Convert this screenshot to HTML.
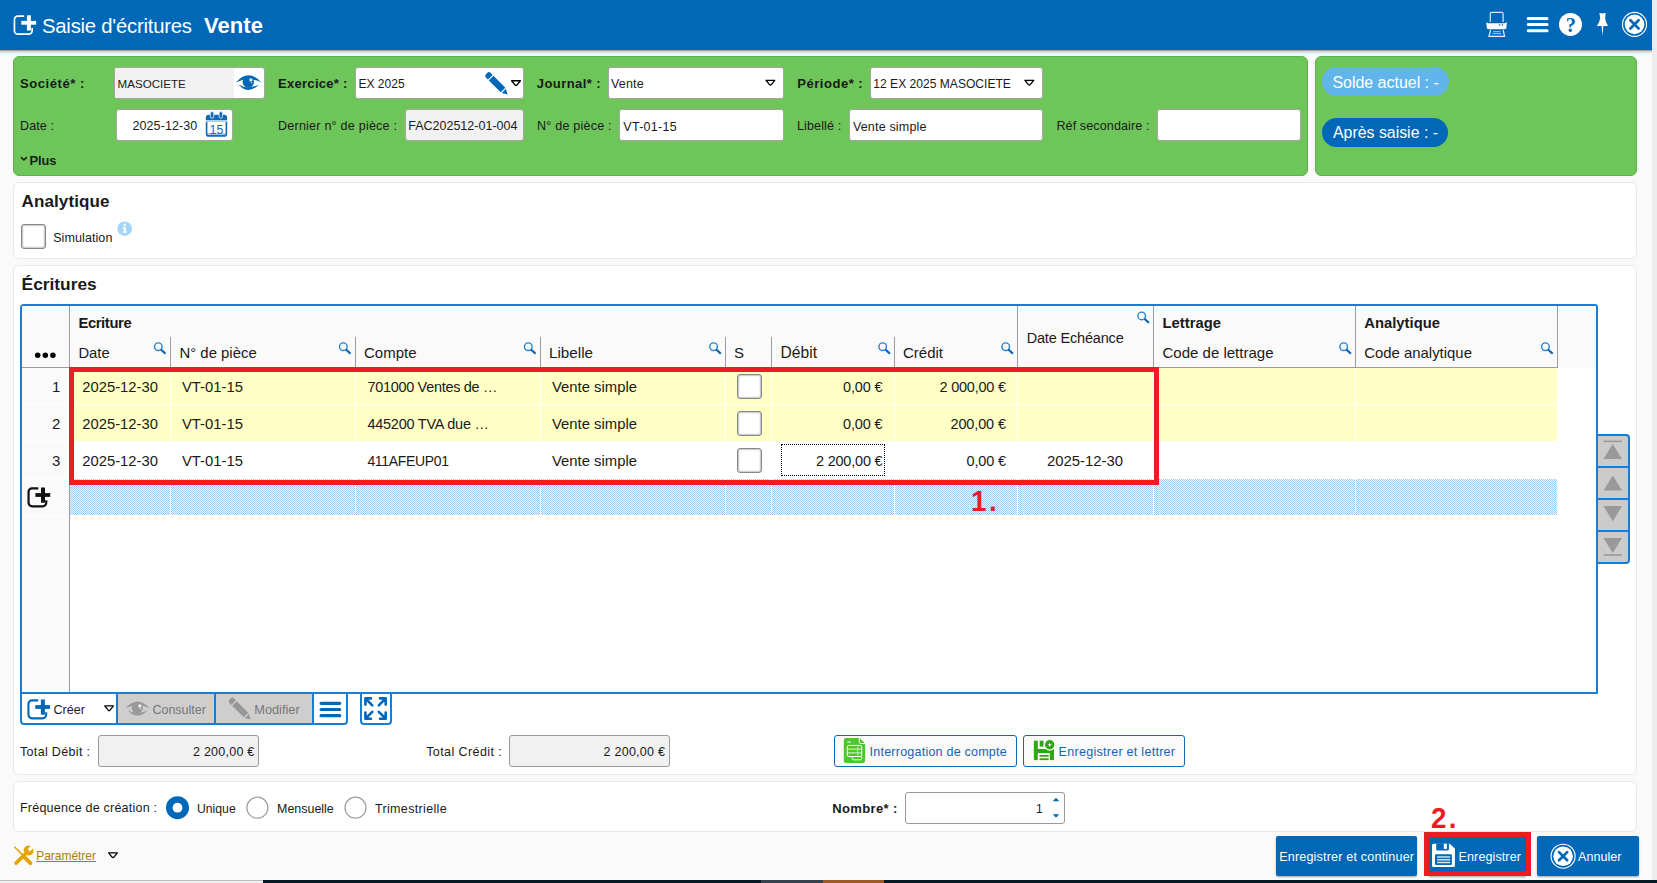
<!DOCTYPE html>
<html><head><meta charset="utf-8"><title>Saisie d'écritures</title>
<style>
*{box-sizing:border-box;margin:0;padding:0}
html,body{width:1657px;height:883px;overflow:hidden;background:#fafafa;font-family:"Liberation Sans",sans-serif;}
#r{position:relative;width:1657px;height:883px;overflow:hidden;background:#fafafa}
#r div,#r svg,#r span{position:absolute}
.t,.ta{white-space:nowrap;line-height:1;}
.gp{background:#6ec55a;border:1px solid #5fb34b;border-radius:6px;box-shadow:0 0 0 1px #fff}
.fld{background:#fff;border:1px solid #a9a3a8;border-radius:3px}
.fg{background:#f1f1f1}
.pan{background:#fff;border:1px solid #e8e8e8;border-radius:6px}
.cb{background:#fff;border:1px solid #878787;border-radius:3px;box-shadow:inset 0 0 1.5px .6px rgba(0,0,0,.38)}
.vl{width:1px;background:#9c9c9c}
.hl{height:1px;background:#9c9c9c}
.y{background:#ffffc6}
.wl{background:#fff}
.bb{background:#0168b7;border-radius:2px;box-shadow:0 1px 2px rgba(0,0,0,.35)}
</style></head><body><div id="r">

<!-- title bar -->
<div style="left:0;top:0;width:1652px;height:50px;background:#0168b7"></div>
<div style="left:0;top:50px;width:1652px;height:4px;background:linear-gradient(rgba(95,80,78,.62),rgba(120,110,110,.22) 45%,rgba(150,150,150,0))"></div>
<div style="left:1652px;top:0;width:5px;height:880px;background:#ececec"></div>

<!-- green panels -->
<div class="gp" style="left:13px;top:56px;width:1295px;height:120px"></div>
<div class="gp" style="left:1315px;top:56px;width:322px;height:120px"></div>

<!-- fields row 1 -->
<div class="fld" style="left:114px;top:67px;width:151px;height:32px;overflow:hidden"><div class="fg" style="left:0;top:0;width:119px;height:30px"></div></div>
<div class="fld" style="left:355px;top:67px;width:169px;height:32px"></div>
<div class="fld" style="left:608px;top:67px;width:176px;height:32px"></div>
<div class="fld" style="left:870px;top:67px;width:173px;height:32px"></div>
<!-- fields row 2 -->
<div class="fld" style="left:116px;top:109px;width:117px;height:32px"></div>
<div class="fld fg" style="left:405px;top:109px;width:119px;height:32px"></div>
<div class="fld" style="left:619px;top:109px;width:165px;height:32px"></div>
<div class="fld" style="left:849px;top:109px;width:194px;height:32px"></div>
<div class="fld" style="left:1157px;top:109px;width:144px;height:32px"></div>

<!-- pills -->
<div style="left:1322px;top:67px;width:127px;height:28.5px;border-radius:15px;background:#62b5ea"></div>
<div style="left:1322px;top:118px;width:126px;height:28.5px;border-radius:15px;background:#0168b7"></div>

<!-- panels -->
<div class="pan" style="left:13px;top:182px;width:1624px;height:77px"></div>
<div class="pan" style="left:13px;top:265px;width:1624px;height:510px"></div>
<div class="pan" style="left:13px;top:781px;width:1624px;height:51px"></div>

<!-- simulation checkbox -->
<div class="cb" style="left:21px;top:224px;width:25px;height:25px"></div>
<svg style="left:117px;top:221px" width="16" height="16" viewBox="0 0 16 16"><circle cx="7.7" cy="7.7" r="7.3" fill="#a3d5f8"/><rect x="6.6" y="6.3" width="2.3" height="5.2" fill="#fff"/><rect x="5.6" y="6.3" width="2" height="1.2" fill="#fff"/><rect x="5.6" y="10.5" width="4.3" height="1.2" fill="#fff"/><circle cx="7.6" cy="3.9" r="1.35" fill="#fff"/></svg>

<!-- GRID -->
<div style="left:20px;top:304px;width:1578px;height:390px;border:2px solid #167dd8;border-radius:4px 3px 0 0;background:#fff"></div>
<!-- header bg -->
<div style="left:22px;top:306px;width:1535px;height:61px;background:#fafafa"></div>
<div style="left:1558px;top:306px;width:38px;height:62px;background:#fafafa"></div>
<!-- row header col -->
<div style="left:22px;top:368px;width:47px;height:324px;background:#fafafa"></div>
<div class="wl" style="left:22px;top:404px;width:47px;height:1px"></div>
<div class="wl" style="left:22px;top:441px;width:47px;height:1px"></div>
<div class="wl" style="left:22px;top:478px;width:47px;height:1px"></div>
<div class="wl" style="left:22px;top:515px;width:47px;height:1px"></div>
<div class="vl" style="left:69px;top:306px;height:386px"></div>
<div class="hl" style="left:22px;top:367px;width:1536px"></div>
<!-- header verticals -->
<div class="vl" style="left:170px;top:337px;height:30px"></div>
<div class="vl" style="left:355px;top:337px;height:30px"></div>
<div class="vl" style="left:540px;top:337px;height:30px"></div>
<div class="vl" style="left:725px;top:337px;height:30px"></div>
<div class="vl" style="left:771px;top:337px;height:30px"></div>
<div class="vl" style="left:894px;top:337px;height:30px"></div>
<div class="vl" style="left:1017px;top:306px;height:61px"></div>
<div class="vl" style="left:1153px;top:306px;height:61px"></div>
<div class="vl" style="left:1355px;top:306px;height:61px"></div>
<div class="vl" style="left:1557px;top:306px;height:62px"></div>
<!-- dots -->
<svg style="left:34px;top:351px" width="24" height="8" viewBox="34 351 24 8"><circle cx="37.7" cy="355.2" r="2.75"/><circle cx="45.3" cy="355.2" r="2.75"/><circle cx="52.9" cy="355.2" r="2.75"/></svg>

<!-- rows -->
<div class="y" style="left:70px;top:368px;width:1487px;height:36px"></div>
<div class="y" style="left:70px;top:405px;width:1487px;height:36px"></div>
<div id="nr" style="left:70px;top:479px;width:1487px;height:36px;background:repeating-conic-gradient(#96cdfd 0% 25%,#fbf5ef 0% 50%) 0 0/2px 2px"></div>
<!-- white col separators in rows -->
<div class="wl" style="left:170px;top:368px;width:1px;height:147px"></div>
<div class="wl" style="left:355px;top:368px;width:1px;height:147px"></div>
<div class="wl" style="left:540px;top:368px;width:1px;height:147px"></div>
<div class="wl" style="left:725px;top:368px;width:1px;height:147px"></div>
<div class="wl" style="left:771px;top:368px;width:1px;height:147px"></div>
<div class="wl" style="left:894px;top:368px;width:1px;height:147px"></div>
<div class="wl" style="left:1017px;top:368px;width:1px;height:147px"></div>
<div class="wl" style="left:1153px;top:368px;width:1px;height:147px"></div>
<div class="wl" style="left:1355px;top:368px;width:1px;height:147px"></div>

<!-- row checkboxes -->
<div class="cb" style="left:737px;top:374px;width:25px;height:25px"></div>
<div class="cb" style="left:737px;top:411px;width:25px;height:25px"></div>
<div class="cb" style="left:737px;top:448px;width:25px;height:25px"></div>
<!-- dotted focus -->
<div style="left:781px;top:444px;width:104px;height:32px;border:1px dotted #000"></div>

<!-- red annotation box -->
<div style="left:69px;top:367px;width:1090px;height:118px;border:5px solid #ed1c24"></div>

<!-- nav buttons -->
<div style="left:1596px;top:434px;width:34px;height:130px;background:#cbcbcb;border:2px solid #167dd8;border-radius:0 4px 4px 0"></div>
<div style="left:1598px;top:466px;width:30px;height:1.5px;background:#167dd8"></div>
<div style="left:1598px;top:498px;width:30px;height:1.5px;background:#167dd8"></div>
<div style="left:1598px;top:530px;width:30px;height:1.5px;background:#167dd8"></div>
<svg style="left:1598px;top:436px" width="30" height="126" viewBox="1598 436 30 126" fill="#999">
<rect x="1603.5" y="440.6" width="18.5" height="1.6"/><path d="M1612.8 444 L1622 459 L1603.5 459Z"/>
<path d="M1612.8 475.5 L1622 490.5 L1603.5 490.5Z"/>
<path d="M1603.5 506 L1622 506 L1612.8 521.5Z"/>
<path d="M1603.5 538 L1622 538 L1612.8 553Z"/><rect x="1603.5" y="554.2" width="18.5" height="1.6"/>
</svg>

<!-- toolbar -->
<div style="left:20px;top:692px;width:328px;height:33px;border:2px solid #167dd8;border-radius:0 0 4px 4px;background:#fff"></div>
<div style="left:118px;top:694px;width:194px;height:29px;background:#cecece"></div>
<div style="left:116px;top:694px;width:2px;height:29px;background:#167dd8"></div>
<div style="left:214px;top:694px;width:2px;height:29px;background:#167dd8"></div>
<div style="left:312px;top:694px;width:2px;height:29px;background:#167dd8"></div>
<div style="left:360px;top:692px;width:32px;height:33px;border:2px solid #167dd8;border-radius:0 0 4px 4px;background:#fff"></div>

<!-- totals -->
<div class="fld fg" style="left:98px;top:735px;width:161px;height:32px;border-color:#9a9a9a"></div>
<div class="fld fg" style="left:509px;top:735px;width:161px;height:32px;border-color:#9a9a9a"></div>
<div style="left:834px;top:735px;width:183px;height:32px;border:1px solid #1168b3;border-radius:3px;background:#fafafa"></div>
<div style="left:1023px;top:735px;width:162px;height:32px;border:1px solid #1168b3;border-radius:3px;background:#fafafa"></div>

<!-- nombre -->
<div class="fld" style="left:905px;top:792px;width:160px;height:32px;border-color:#9a9a9a"></div>

<!-- radios -->
<svg style="left:165px;top:795px" width="204" height="26" viewBox="165 795 204 26">
<circle cx="177.5" cy="807.7" r="11.5" fill="#0168b7"/><circle cx="177.5" cy="807.7" r="4.9" fill="#fff"/>
<circle cx="257.4" cy="807.7" r="10.5" fill="#fff" stroke="#a2a2a2" stroke-width="1.3"/>
<circle cx="355.5" cy="807.7" r="10.5" fill="#fff" stroke="#a2a2a2" stroke-width="1.3"/>
</svg>

<!-- bottom buttons -->
<div class="bb" style="left:1276px;top:836px;width:141px;height:40px"></div>
<div class="bb" style="left:1429px;top:836px;width:97px;height:40px;border-radius:0"></div>
<div style="left:1424px;top:832px;width:107px;height:44px;border:5px solid #ed1c24"></div>
<div class="bb" style="left:1537px;top:836px;width:102px;height:40px"></div>

<!-- bottom strip -->
<div style="left:0;top:880px;width:263px;height:3px;background:#f0f0f0;border-top:1px solid #bdbdbd"></div>
<div style="left:263px;top:880px;width:1394px;height:3px;background:#041825"></div>
<div style="left:761px;top:880px;width:62px;height:3px;background:#33424d"></div>
<div style="left:823px;top:880px;width:61px;height:3px;background:#9c5a26"></div>

<span class="ta" id="a1" style="left:971.3px;top:486px;font-size:29.6px;font-weight:700;color:#ed1c24;letter-spacing:2.6px;transform:scaleX(.94);transform-origin:0 0">1.</span>
<span class="ta" id="a2" style="left:1431.1px;top:803.4px;font-size:29.6px;font-weight:700;color:#ed1c24;letter-spacing:2.4px;transform:scaleX(.94);transform-origin:0 0">2.</span>
<svg style="left:0;top:0" width="1657" height="883" viewBox="0 0 1657 883">
<defs>
<g id="cr"><path d="M10.6 0.85H4.35A3.5 3.5 0 0 0 0.85 4.35V15.35A3.5 3.5 0 0 0 4.35 18.85H15.05A3.5 3.5 0 0 0 18.55 15.35V12.7" fill="none" stroke="currentColor" style="stroke-width:var(--sw,1.7px)"/><rect x="7.7" y="5.6" width="14.8" height="3.8" fill="currentColor"/><rect x="13.3" y="0" width="4" height="15.2" fill="currentColor"/></g>
<g id="eye"><path d="M0 7.6Q12.5 -6.6 25.2 7.6Q12.5 1.2 0 7.6Z" fill="currentColor"/><circle cx="12.3" cy="7.2" r="5.7" fill="currentColor"/><circle cx="14.9" cy="5.1" r="1.6" fill="#fff" fill-opacity=".9"/><circle cx="15.6" cy="8" r=".7" fill="#fff" fill-opacity=".8"/><path d="M2.4 9.6Q12.5 20.6 23 9.6Q12.5 15.4 2.4 9.6Z" fill="currentColor"/></g>
<g id="pen"><path d="M2.2 -3.3H5.2V3.3H2.2A2.2 2.2 0 0 1 0 1.1V-1.1A2.2 2.2 0 0 1 2.2 -3.3Z"/><rect x="6.4" y="-3.3" width="16.8" height="6.6"/><path d="M24.4 -2.9L29.7 0L24.4 2.9Z"/></g>
<g id="dd"><path d="M0.7 0.75H9.5L6 5Q5.1 5.9 4.2 5Z" fill="#fff" stroke="#000" stroke-width="1.3" stroke-linejoin="round"/></g>
<g id="mag"><circle cx="4.7" cy="4.1" r="3.8" fill="none" stroke="#2583d0" stroke-width="1.4"/><path d="M7.9 7.4L11.3 10.5" stroke="#1466b3" stroke-width="2.2" stroke-linecap="round"/></g>
<g id="cx"><circle cx="0" cy="0" r="12" fill="none" stroke="#fff" stroke-width="1.15"/><circle cx="0" cy="0" r="9.8" fill="#fff"/><path d="M-4.1 -4.1L4.1 4.1M4.1 -4.1L-4.1 4.1" stroke="#0168b7" stroke-width="2.7" stroke-linecap="round"/></g>
</defs>

<!-- title icons -->
<use href="#cr" x="13.6" y="15.3" color="#fff"/>
<!-- printer -->
<path d="M1490.3 22V13.9A1.5 1.5 0 0 1 1491.8 12.4H1501.6A1.5 1.5 0 0 1 1503.1 13.9V22" fill="none" stroke="#fff" stroke-opacity=".85" stroke-width="1.2"/>
<path d="M1486.3 22.2L1488.2 23.2H1505L1506.9 22.2L1506.3 28.4L1504.6 29.2H1488.6L1486.9 28.4Z" fill="#fff"/>
<rect x="1498.8" y="24.2" width="1.4" height="1.4" fill="#0168b7"/><rect x="1501.7" y="24.2" width="1.4" height="1.4" fill="#0168b7"/>
<path d="M1490.6 30L1489 36.4H1504.6L1503.1 30" fill="none" stroke="#fff" stroke-width="1.2" stroke-opacity=".9"/>
<path d="M1493 31.7H1500.6M1492.3 33.7H1501.3" stroke="#fff" stroke-opacity=".65" stroke-width="1"/>
<!-- hamburger -->
<path d="M1528.2 18.45H1547M1528.2 24.45H1547M1528.2 30.7H1547" stroke="#fff" stroke-width="3.1" stroke-linecap="round"/>
<!-- help -->
<circle cx="1570.5" cy="24.4" r="11.5" fill="#fff"/>
<text x="1570.9" y="31.5" font-family="Liberation Serif" font-weight="700" font-size="20.5" fill="#0168b7" text-anchor="middle">?</text>
<!-- pin -->
<path d="M1599.4 13Q1602.5 13.8 1605.7 13L1605.1 18Q1605.3 21.5 1608 25.9H1603.4L1602.5 35.8L1601.6 25.9H1596.9Q1599.9 21.5 1600.2 18Z" fill="#fff"/>
<!-- close -->
<use href="#cx" x="1634.5" y="24.4"/>

<!-- eye in societe -->
<use href="#eye" x="236" y="74.8" color="#0168b7"/>
<!-- calendar -->
<path d="M205.8 120.3V117.8A3 3 0 0 1 208.8 114.8H224.2A3 3 0 0 1 227.2 117.8V120.3Z" fill="#1469b5"/>
<rect x="205.8" y="120.3" width="21.4" height="1.8" fill="#a8cdec"/>
<path d="M206.6 122V133.9A2 2 0 0 0 208.6 135.9H224.4A2 2 0 0 0 226.4 133.9V122" fill="#fff" stroke="#1469b5" stroke-width="1.6"/>
<path d="M207 134H226" stroke="#1469b5" stroke-width=".9" stroke-opacity=".8"/>
<rect x="210.4" y="111.6" width="3.4" height="6.6" rx="1.7" fill="#1469b5" stroke="#d6e9f8" stroke-width=".9"/>
<rect x="219.1" y="111.6" width="3.4" height="6.6" rx="1.7" fill="#1469b5" stroke="#d6e9f8" stroke-width=".9"/>
<text x="216.4" y="133.7" font-family="Liberation Sans" font-size="12.3" fill="#1469b5" text-anchor="middle">15</text>
<!-- pencil blue -->
<g transform="translate(486.6 73.6) rotate(45)" fill="#0168b7"><use href="#pen"/></g>
<!-- dropdowns -->
<use href="#dd" x="510.9" y="80"/>
<use href="#dd" x="765.3" y="79.6"/>
<use href="#dd" x="1024.2" y="79.6"/>
<!-- plus chevron -->
<path d="M21.4 157.6L23.9 160L26.4 157.6" fill="none" stroke="#1a1a1a" stroke-width="1.5" stroke-linecap="round" stroke-linejoin="round"/>

<!-- magnifiers -->
<use href="#mag" x="153.6" y="342.6"/><use href="#mag" x="338.6" y="342.6"/><use href="#mag" x="523.6" y="342.6"/><use href="#mag" x="708.9" y="342.6"/>
<use href="#mag" x="878" y="342.6"/><use href="#mag" x="1001" y="342.6"/><use href="#mag" x="1137" y="311.8"/><use href="#mag" x="1339" y="342.6"/><use href="#mag" x="1540.7" y="342.6"/>

<!-- new row icon -->
<use href="#cr" x="27.7" y="487.5" color="#111" style="--sw:2.2px"/>

<!-- toolbar icons -->
<use href="#cr" x="27.6" y="699.5" color="#0168b7" style="--sw:2.1px"/>
<use href="#dd" x="104" y="705.2"/>
<g transform="translate(125.3 701) scale(.976 .96)"><use href="#eye" color="#999"/></g>
<g transform="translate(230 699) rotate(45) scale(.98)" fill="#979797"><use href="#pen"/></g>
<path d="M321.1 703.3H339.7M321.1 709.5H339.7M321.1 715.7H339.7" stroke="#0168b7" stroke-width="3.2" stroke-linecap="round"/>
<!-- fullscreen -->
<g fill="none" stroke="#0168b7" stroke-width="2.6" stroke-linecap="round" stroke-linejoin="round">
<path d="M371 698.4H365.4V704.6M365.9 698.9L372.3 705.3"/>
<path d="M380 698.4H385.7V704.6M385.2 698.9L378.8 705.3"/>
<path d="M371 718.7H365.4V712.5M365.9 718.2L372.3 711.8"/>
<path d="M380 718.7H385.7V712.5M385.2 718.2L378.8 711.8"/>
</g>

<!-- green doc icon -->
<path d="M846.3 738.1H859.3L865.1 743.5V760.4A2.5 2.5 0 0 1 862.6 762.9H846.3A2.5 2.5 0 0 1 843.8 760.4V740.6A2.5 2.5 0 0 1 846.3 738.1Z" fill="#4cc82b"/>
<path d="M859.3 738.1V742.3A1.2 1.2 0 0 0 860.5 743.5H865.1" fill="#4cc82b" stroke="#fff" stroke-width="1"/>
<path d="M847.3 742.1H851" stroke="#fff" stroke-opacity=".75" stroke-width="1.3"/>
<rect x="847.3" y="745.4" width="14.4" height="11.2" rx="1.6" fill="none" stroke="#fff" stroke-width="1"/>
<path d="M847.3 749.1H861.7M847.3 752.9H861.7" stroke="#fff" stroke-width=".9" stroke-opacity=".9"/>
<path d="M857.8 745.4V756.6" stroke="#fff" stroke-width=".9" stroke-opacity=".6"/>
<path d="M852.2 756.6V758.4A1.4 1.4 0 0 0 853.6 759.8H860.3A1.4 1.4 0 0 0 861.7 758.4V756.6" fill="none" stroke="#fff" stroke-width="1"/>
<!-- green floppy -->
<g fill="#2ea812">
<rect x="1033.9" y="740.7" width="3.9" height="19.4"/>
<rect x="1039.7" y="740.7" width="3.8" height="5.9"/>
<rect x="1033.9" y="749" width="20.1" height="4.1"/>
<rect x="1049.9" y="750.2" width="4.1" height="9.9"/>
<rect x="1039.5" y="755" width="9.2" height="1.7"/>
<rect x="1039.5" y="758.3" width="9.2" height="1.8"/>
</g>
<circle cx="1049.7" cy="744.8" r="5.3" fill="#2ea812" stroke="#fafafa" stroke-width="1.2"/>
<path d="M1049.7 742.7L1050.3 744.2L1051.8 744.8L1050.3 745.4L1049.7 746.9L1049.1 745.4L1047.6 744.8L1049.1 744.2Z" fill="#fff"/>

<!-- spinner -->
<path d="M1052.7 801.3L1056 797.8L1059.3 801.3Z" fill="#0168b7"/><path d="M1052.7 814.2L1056 817.7L1059.3 814.2Z" fill="#0168b7"/>

<!-- wrench & screwdriver -->
<g stroke="#e5a50a" fill="none" stroke-linecap="round">
<path d="M14.6 847L23 855.4" stroke-width="1.5"/>
<path d="M24.6 857.3L30.4 863.1" stroke-width="3.9"/>
<path d="M16.1 863.1L25.5 853.7" stroke-width="3.7"/>
</g>
<path d="M24.4 852.6A4.6 4.6 0 0 1 30.6 846.2L27.7 849.1L29.9 851.4L32.9 848.5A4.6 4.6 0 0 1 26.6 854.8Z" fill="#e5a50a"/>
<use href="#dd" x="107.9" y="852.1"/>

<!-- floppy white -->
<path d="M1433.5 843.8H1449.6L1454.9 848.6V865.4A1.5 1.5 0 0 1 1453.4 866.9H1433.5A1.5 1.5 0 0 1 1432 865.4V845.3A1.5 1.5 0 0 1 1433.5 843.8Z" fill="#fff"/>
<path d="M1436.2 843.6H1448.9V849.3A1.2 1.2 0 0 1 1447.7 850.5H1437.4A1.2 1.2 0 0 1 1436.2 849.3Z" fill="#0168b7"/>
<rect x="1443.8" y="843.8" width="3.1" height="5.3" rx=".6" fill="#fff"/>
<rect x="1435" y="854.2" width="16.9" height="10.9" rx="1" fill="#0168b7"/>
<path d="M1437.6 856.9H1449.6M1437.6 859.8H1449.6M1437.6 862.6H1449.6" stroke="#fff" stroke-opacity=".82" stroke-width="1.5" stroke-linecap="round"/>
<!-- annuler circle x -->
<use href="#cx" x="1563.1" y="856.2"/>
</svg>

<span class="t" id="t0" style="left:42.0px;top:16.00px;font-size:20.27px;color:#fff;letter-spacing:-0.217px;">Saisie d&#x27;écritures</span>
<span class="t" id="t1" style="left:204.0px;top:15.00px;font-size:21.95px;color:#fff;font-weight:700;letter-spacing:0.117px;">Vente</span>
<span class="t" id="t2" style="left:20.0px;top:77.00px;font-size:13.06px;color:#1a1a1a;font-weight:700;letter-spacing:0.537px;">Société* :</span>
<span class="t" id="t3" style="left:117.6px;top:79.00px;font-size:11.58px;color:#1a1a1a;letter-spacing:-0.013px;">MASOCIETE</span>
<span class="t" id="t4" style="left:278.0px;top:77.00px;font-size:13.06px;color:#1a1a1a;font-weight:700;letter-spacing:0.267px;">Exercice* :</span>
<span class="t" id="t5" style="left:358.4px;top:78.00px;font-size:12.07px;color:#1a1a1a;">EX 2025</span>
<span class="t" id="t6" style="left:536.8px;top:77.00px;font-size:13.06px;color:#1a1a1a;font-weight:700;letter-spacing:0.403px;">Journal* :</span>
<span class="t" id="t7" style="left:611.0px;top:78.00px;font-size:12.54px;color:#1a1a1a;letter-spacing:0.159px;">Vente</span>
<span class="t" id="t8" style="left:797.3px;top:77.00px;font-size:13.06px;color:#1a1a1a;font-weight:700;letter-spacing:0.499px;">Période* :</span>
<span class="t" id="t9" style="left:873.3px;top:78.00px;font-size:12.08px;color:#1a1a1a;">12 EX 2025 MASOCIETE</span>
<span class="t" id="t10" style="left:20.0px;top:120.00px;font-size:12.54px;color:#1a1a1a;letter-spacing:0.113px;">Date :</span>
<span class="t" id="t11" style="left:132.5px;top:120.00px;font-size:12.54px;color:#1a1a1a;letter-spacing:0.066px;">2025-12-30</span>
<span class="t" id="t12" style="left:278.0px;top:120.00px;font-size:12.54px;color:#1a1a1a;letter-spacing:0.231px;">Dernier n° de pièce :</span>
<span class="t" id="t13" style="left:408.2px;top:120.00px;font-size:12.52px;color:#1a1a1a;">FAC202512-01-004</span>
<span class="t" id="t14" style="left:537.0px;top:120.00px;font-size:12.54px;color:#1a1a1a;letter-spacing:0.226px;">N° de pièce :</span>
<span class="t" id="t15" style="left:623.3px;top:121.00px;font-size:12.54px;color:#1a1a1a;letter-spacing:0.265px;">VT-01-15</span>
<span class="t" id="t16" style="left:797.0px;top:120.00px;font-size:12.54px;color:#1a1a1a;letter-spacing:0.125px;">Libellé :</span>
<span class="t" id="t17" style="left:852.9px;top:121.00px;font-size:12.54px;color:#1a1a1a;letter-spacing:0.168px;">Vente simple</span>
<span class="t" id="t18" style="left:1056.4px;top:120.00px;font-size:12.54px;color:#1a1a1a;letter-spacing:0.123px;">Réf secondaire :</span>
<span class="t" id="t19" style="left:29.4px;top:155.00px;font-size:12.83px;color:#1a1a1a;font-weight:700;">Plus</span>
<span class="t" id="t20" style="left:1332.4px;top:75.00px;font-size:15.95px;color:#fff;letter-spacing:0.006px;">Solde actuel : -</span>
<span class="t" id="t21" style="left:1333.0px;top:125.00px;font-size:15.88px;color:#fff;">Après saisie : -</span>
<span class="t" id="t22" style="left:21.6px;top:193.00px;font-size:17px;color:#1a1a1a;font-weight:700;letter-spacing:0.110px;">Analytique</span>
<span class="t" id="t23" style="left:53.2px;top:232.00px;font-size:12.54px;color:#1a1a1a;letter-spacing:0.076px;">Simulation</span>
<span class="t" id="t24" style="left:21.6px;top:276.00px;font-size:17.32px;color:#1a1a1a;font-weight:700;letter-spacing:0.005px;">Écritures</span>
<span class="t" id="t25" style="left:78.4px;top:316.00px;font-size:14.8px;color:#1a1a1a;font-weight:700;letter-spacing:-0.375px;">Ecriture</span>
<span class="t" id="t26" style="left:78.4px;top:346.00px;font-size:14.82px;color:#1a1a1a;">Date</span>
<span class="t" id="t27" style="left:179.5px;top:346.00px;font-size:14.9px;color:#1a1a1a;letter-spacing:0.004px;">N° de pièce</span>
<span class="t" id="t28" style="left:364.0px;top:345.00px;font-size:14.99px;color:#1a1a1a;letter-spacing:0.006px;">Compte</span>
<span class="t" id="t29" style="left:549.0px;top:345.00px;font-size:15.22px;color:#1a1a1a;">Libelle</span>
<span class="t" id="t30" style="left:733.9px;top:345.00px;font-size:15px;color:#1a1a1a;">S</span>
<span class="t" id="t31" style="left:780.6px;top:345.00px;font-size:15.59px;color:#1a1a1a;letter-spacing:0.006px;">Débit</span>
<span class="t" id="t32" style="left:903.0px;top:345.00px;font-size:14.99px;color:#1a1a1a;">Crédit</span>
<span class="t" id="t33" style="left:1026.7px;top:331.00px;font-size:14.47px;color:#1a1a1a;letter-spacing:-0.161px;">Date Echéance</span>
<span class="t" id="t34" style="left:1162.5px;top:316.00px;font-size:14.8px;color:#1a1a1a;font-weight:700;letter-spacing:0.016px;">Lettrage</span>
<span class="t" id="t35" style="left:1162.5px;top:345.00px;font-size:15.01px;color:#1a1a1a;letter-spacing:0.005px;">Code de lettrage</span>
<span class="t" id="t36" style="left:1364.2px;top:316.00px;font-size:14.8px;color:#1a1a1a;font-weight:700;letter-spacing:0.018px;">Analytique</span>
<span class="t" id="t37" style="left:1364.2px;top:346.00px;font-size:14.91px;color:#1a1a1a;">Code analytique</span>
<span class="t" id="t38" style="left:53.5px;top:704.00px;font-size:12.59px;color:#1a1a1a;letter-spacing:0.012px;">Créer</span>
<span class="t" id="t39" style="left:152.4px;top:704.00px;font-size:12.54px;color:#777;letter-spacing:-0.005px;">Consulter</span>
<span class="t" id="t40" style="left:254.3px;top:704.00px;font-size:12.76px;color:#777;letter-spacing:0.006px;">Modifier</span>
<span class="t" id="t41" style="left:20.0px;top:746.00px;font-size:12.54px;color:#1a1a1a;letter-spacing:0.319px;">Total Débit :</span>
<span class="t" id="t42" style="left:193.0px;top:746.00px;font-size:12.54px;color:#1a1a1a;letter-spacing:0.230px;">2 200,00 €</span>
<span class="t" id="t43" style="left:426.2px;top:746.00px;font-size:12.54px;color:#1a1a1a;letter-spacing:0.397px;">Total Crédit :</span>
<span class="t" id="t44" style="left:603.5px;top:746.00px;font-size:12.54px;color:#1a1a1a;letter-spacing:0.252px;">2 200,00 €</span>
<span class="t" id="t45" style="left:869.6px;top:746.00px;font-size:12.54px;color:#1565b0;letter-spacing:0.215px;">Interrogation de compte</span>
<span class="t" id="t46" style="left:1058.6px;top:746.00px;font-size:12.54px;color:#1565b0;letter-spacing:0.270px;">Enregistrer et lettrer</span>
<span class="t" id="t47" style="left:20.0px;top:802.00px;font-size:12.54px;color:#1a1a1a;letter-spacing:0.211px;">Fréquence de création :</span>
<span class="t" id="t48" style="left:197.0px;top:803.00px;font-size:12.21px;color:#1a1a1a;letter-spacing:0.006px;">Unique</span>
<span class="t" id="t49" style="left:277.0px;top:803.00px;font-size:12.46px;color:#1a1a1a;letter-spacing:0.004px;">Mensuelle</span>
<span class="t" id="t50" style="left:375.0px;top:803.00px;font-size:12.54px;color:#1a1a1a;letter-spacing:0.320px;">Trimestrielle</span>
<span class="t" id="t51" style="left:832.2px;top:802.00px;font-size:13.06px;color:#1a1a1a;font-weight:700;letter-spacing:0.357px;">Nombre* :</span>
<span class="t" id="t52" style="left:1036.0px;top:803.00px;font-size:12px;color:#1a1a1a;">1</span>
<span class="t" id="t53" style="left:36.2px;top:851.00px;font-size:11.95px;color:#a87d0a;letter-spacing:0.009px;text-decoration:underline;">Paramétrer</span>
<span class="t" id="t54" style="left:1279.2px;top:851.00px;font-size:12.54px;color:#fff;letter-spacing:0.197px;">Enregistrer et continuer</span>
<span class="t" id="t55" style="left:1458.6px;top:851.00px;font-size:12.54px;color:#fff;letter-spacing:0.100px;">Enregistrer</span>
<span class="t" id="t56" style="left:1578.0px;top:851.00px;font-size:12.54px;color:#fff;letter-spacing:0.049px;">Annuler</span>
<span class="t" id="t57" style="left:52.0px;top:379.00px;font-size:15px;color:#1a1a1a;">1</span>
<span class="t" id="t58" style="left:82.3px;top:380.00px;font-size:14.78px;color:#1a1a1a;letter-spacing:0.008px;">2025-12-30</span>
<span class="t" id="t59" style="left:182.0px;top:380.00px;font-size:14.8px;color:#1a1a1a;">VT-01-15</span>
<span class="t" id="t60" style="left:552.0px;top:380.00px;font-size:14.84px;color:#1a1a1a;letter-spacing:0.009px;">Vente simple</span>
<span class="t" id="t61" style="left:52.0px;top:416.00px;font-size:15px;color:#1a1a1a;">2</span>
<span class="t" id="t62" style="left:82.3px;top:417.00px;font-size:14.78px;color:#1a1a1a;letter-spacing:0.008px;">2025-12-30</span>
<span class="t" id="t63" style="left:182.0px;top:417.00px;font-size:14.8px;color:#1a1a1a;">VT-01-15</span>
<span class="t" id="t64" style="left:552.0px;top:417.00px;font-size:14.84px;color:#1a1a1a;letter-spacing:0.009px;">Vente simple</span>
<span class="t" id="t65" style="left:52.0px;top:453.00px;font-size:15px;color:#1a1a1a;">3</span>
<span class="t" id="t66" style="left:82.3px;top:454.00px;font-size:14.78px;color:#1a1a1a;letter-spacing:0.008px;">2025-12-30</span>
<span class="t" id="t67" style="left:182.0px;top:454.00px;font-size:14.8px;color:#1a1a1a;">VT-01-15</span>
<span class="t" id="t68" style="left:552.0px;top:454.00px;font-size:14.84px;color:#1a1a1a;letter-spacing:0.009px;">Vente simple</span>
<span class="t" id="t69" style="left:367.4px;top:380.00px;font-size:14.47px;color:#1a1a1a;letter-spacing:-0.297px;">701000 Ventes de …</span>
<span class="t" id="t70" style="left:367.4px;top:417.00px;font-size:14.47px;color:#1a1a1a;letter-spacing:-0.225px;">445200 TVA due …</span>
<span class="t" id="t71" style="left:367.4px;top:455.00px;font-size:13.95px;color:#1a1a1a;letter-spacing:-0.289px;">411AFEUP01</span>
<span class="t" id="t72" style="left:843.0px;top:380.00px;font-size:14.47px;color:#1a1a1a;letter-spacing:-0.127px;">0,00 €</span>
<span class="t" id="t73" style="left:843.0px;top:417.00px;font-size:14.47px;color:#1a1a1a;letter-spacing:-0.127px;">0,00 €</span>
<span class="t" id="t74" style="left:816.0px;top:454.00px;font-size:14.47px;color:#1a1a1a;letter-spacing:-0.199px;">2 200,00 €</span>
<span class="t" id="t75" style="left:939.5px;top:380.00px;font-size:14.47px;color:#1a1a1a;letter-spacing:-0.210px;">2 000,00 €</span>
<span class="t" id="t76" style="left:950.5px;top:417.00px;font-size:14.47px;color:#1a1a1a;letter-spacing:-0.118px;">200,00 €</span>
<span class="t" id="t77" style="left:966.5px;top:454.00px;font-size:14.47px;color:#1a1a1a;letter-spacing:-0.147px;">0,00 €</span>
<span class="t" id="t78" style="left:1047.0px;top:454.00px;font-size:14.86px;color:#1a1a1a;">2025-12-30</span>
</div></body></html>
